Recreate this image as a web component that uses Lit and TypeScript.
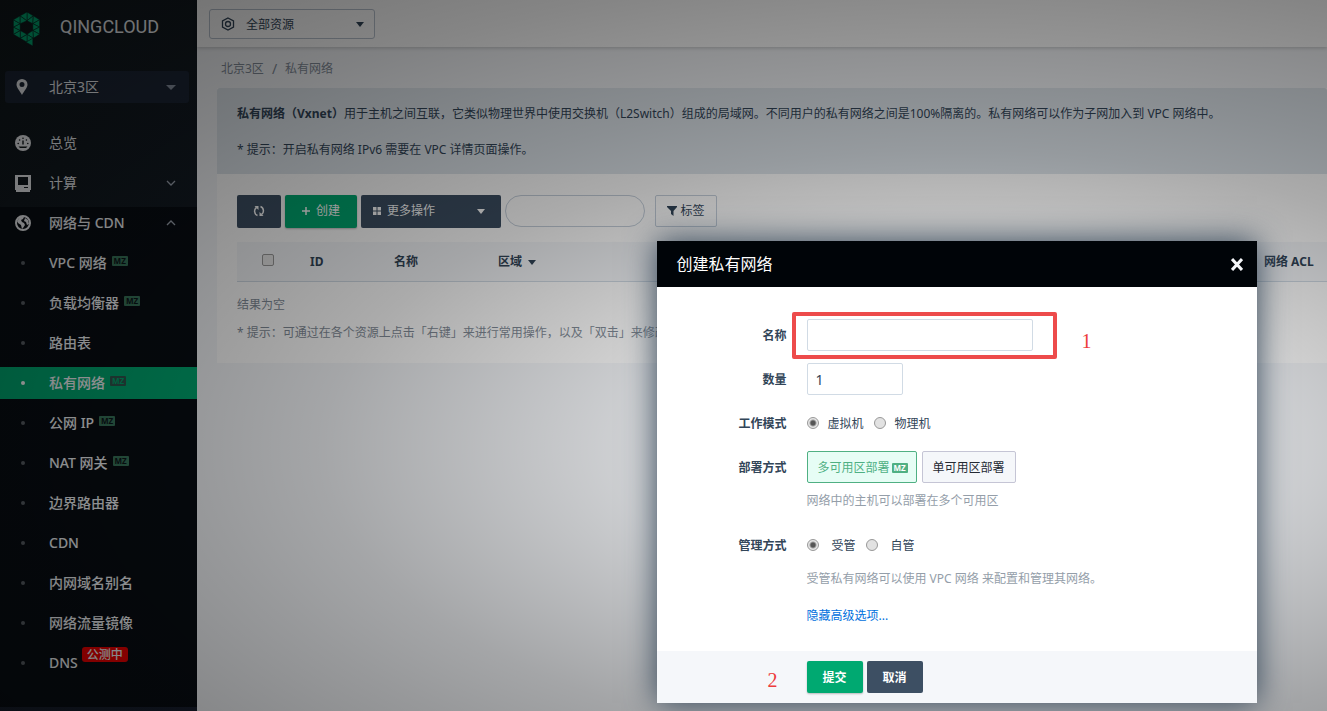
import { LitElement, html, css, svg } from "lit";
import { customElement } from "lit/decorators.js";

interface NavItem { label: string; mz?: boolean; active?: boolean; beta?: string; }

const NAV: NavItem[] = [
  { label: "VPC 网络", mz: true },
  { label: "负载均衡器", mz: true },
  { label: "路由表" },
  { label: "私有网络", mz: true, active: true },
  { label: "公网 IP", mz: true },
  { label: "NAT 网关", mz: true },
  { label: "边界路由器" },
  { label: "CDN" },
  { label: "内网域名别名" },
  { label: "网络流量镜像" },
  { label: "DNS", beta: "公测中" },
];

const hexLogo = () => {
  const outer = [[14, 0], [27, 8], [27, 23], [14, 31], [0, 23], [0, 8]];
  const inner = [[14, 9], [20, 12], [20, 19], [14, 23], [7, 19], [7, 12]];
  return svg`<g fill="#00b277" stroke="#0b1419" stroke-width=".5">
    ${outer.map((p, i) => {
      const q = outer[(i + 1) % 6], a = inner[i], b = inner[(i + 1) % 6];
      const m = [(p[0] + q[0]) / 2, (p[1] + q[1]) / 2];
      return svg`<path d="M${p} L${m} L${a}Z"></path><path d="M${m} L${a} L${b}Z"></path><path d="M${m} L${q} L${b}Z"></path>`;
    })}
    <path d="M13 31L20 27V35Z"></path>
  </g>`;
};

@customElement("app-root")
export class AppRoot extends LitElement {
  static styles = css`
    :host {
      display: block;
      position: relative;
      min-height: 100vh;
      overflow: hidden;
      font: 12px/20px "Noto Sans", "Noto Sans CJK SC", sans-serif;
      color: #324558;
    }
    * { box-sizing: border-box; }
    svg { display: block; flex: none; }
    button, input, select { font: inherit; color: inherit; margin: 0; }
    a { color: inherit; text-decoration: none; }
    .shell { display: flex; min-height: 100vh; background: #f5f7fa; }

    .side { width: 197px; flex: none; background: linear-gradient(135deg, #10181b, #181f2f); color: #f5f7fa; }
    .brand { display: flex; align-items: center; height: 56px; padding: 2px 12px 0; gap: 19px; }
    .brand-name { font: 18px/24px "Roboto", sans-serif; margin-bottom: 4px; }
    .zone {
      display: flex; align-items: center; width: 184px; height: 32px; margin: 15px 5px 24px;
      padding: 0 13px 0 10px; border: 0; border-radius: 3px; background: #1c2636;
      font-size: 14px; text-align: left;
    }
    .zone span { flex: 1; margin-left: 20px; }
    .zone .caret { color: #8c96a5; border-left-width: 5px; border-right-width: 5px; }
    .caret { width: 0; height: 0; border: 4px solid transparent; border-top: 5px solid; border-bottom: 0; }
    .group { display: flex; align-items: center; height: 32px; margin-bottom: 8px; padding: 0 21px 0 15px; font-size: 14px; }
    .group span { flex: 1; margin-left: 18px; }
    .group .chev { color: #a0a8b4; }
    .open { background: #080d13; min-height: 500px; font-weight: 500; }
    .open ul { list-style: none; margin: 0; padding: 0; }
    .open li { display: flex; margin-bottom: 8px; }
    .nav { flex: 1; display: flex; align-items: center; height: 32px; padding-left: 21px; font-size: 14px; }
    .dot { width: 4px; height: 4px; border-radius: 50%; background: #5a6067; margin-right: 24px; }
    .nav.on { background: #00a971; }
    .nav.on .dot { background: #fff; }
    .mz {
      width: 16px; height: 10px; margin: 0 0 4px 5px; border-radius: 1px; background: #39775c; color: #0b1419;
      font: bold 8px/10px "Noto Sans", sans-serif; text-align: center;
    }
    .nav.on .mz { background: #30574e; color: #00a971; }
    .beta { height: 15px; margin: 0 0 18px 4px; padding: 0 5px; border-radius: 3px; background: #f00000; font-size: 12px; line-height: 15px; }

    .main { flex: 1; min-width: 0; }
    .top { height: 47px; padding: 9px 12px; background: #fff; box-shadow: 0 1px 4px rgba(0,0,0,.2); position: relative; }
    .scope { display: flex; align-items: center; width: 166px; height: 30px; padding: 0 10px 0 11px; border: 1px solid #b9c3cf; border-radius: 3px; background: none; }
    .scope span { flex: 1; text-align: left; margin-left: 11px; padding-top: 1px; }
    .crumbs { display: flex; gap: 8px; height: 41px; align-items: center; padding: 3px 24px 0; color: #838d99; }
    .crumbs span { font-size: 14px; }
    .panel { margin-left: 20px; background: #fff; padding-bottom: 12px; }
    .intro { height: 86px; padding: 16px 20px; background: #dfe6ec; border-radius: 3px 3px 0 0; }
    .intro p { margin: 0 0 16px; white-space: nowrap; }
    .tools { display: flex; gap: 4px; align-items: center; padding: 20px 20px 14px; height: 68px; }
    .btn { display: flex; align-items: center; justify-content: center; gap: 6px; height: 33px; padding: 0 12px; border: 0; border-radius: 2px; background: #3d4f63; color: #fff; }
    .btn.go { background: #00a971; box-shadow: 0 1px 2px rgba(0,0,0,.25); }
    .icon-btn { width: 44px; }
    .tools .go { width: 72px; }
    .more { width: 140px; padding-right: 16px; }
    .more span { flex: 1; text-align: left; }
    .search { width: 140px; height: 32px; padding: 0 14px; border: 1px solid #c5cfdb; border-radius: 16px; background: none; }
    .tag { display: flex; align-items: center; justify-content: center; gap: 3px; width: 62px; height: 32px; margin-left: 6px; padding: 0; border: 1px solid #c5cfdb; border-radius: 2px; background: none; }
    table { width: calc(100% - 20px); margin-left: 20px; border-collapse: collapse; table-layout: fixed; }
    th { height: 39px; padding: 2px 0 0; text-align: left; background: #f5f7fa; border-bottom: 1px solid #d1dbe5; white-space: nowrap; }
    th .caret { display: inline-block; margin-left: 3px; vertical-align: middle; }
    .c0 { width: 73px; } .c1 { width: 84px; } .c2 { width: 104px; } .c3 { width: 158px; } .c5 { width: 63px; }
    th input { display: block; appearance: none; width: 12px; height: 12px; margin-left: 25px; margin-bottom: 5px; border: 1px solid #9a9a9a; border-radius: 2px; background: #eaeaea; }
    td { padding: 13px 0 0; color: #838d99; white-space: nowrap; overflow: hidden; }
    td p { margin: 0 0 8px; }

    .veil {
      position: absolute; inset: 0;
      background: radial-gradient(ellipse farthest-corner at 72% 63%,
        rgba(0,0,0,.05), rgba(0,0,0,.17) 26%, rgba(0,0,0,.33) 47%, rgba(0,0,0,.38) 56%, rgba(0,0,0,.48) 75%, rgba(0,0,0,.58));
    }
    .modal {
      position: absolute; left: calc(50% - 7px); top: 241px; width: 600px; background: #fff;
      box-shadow: 0 0 30px #324558;
    }
    .head { display: flex; align-items: center; justify-content: space-between; height: 46px; padding: 0 14px 0 20px; background: #000408; color: #fff; }
    .head h2 { margin: 0; font-size: 16px; font-weight: 400; }
    .close { padding: 0; border: 0; background: none; color: #f5f7fa; }
    form { margin: 0; }
    .fields { padding: 32px 20px 25px 0; }
    .row { display: grid; grid-template-columns: 130px 1fr; column-gap: 20px; align-items: center; min-height: 32px; margin-bottom: 12px; }
    .row .key { text-align: right; font-weight: 700; padding-top: 2px; }
    .text { display: block; height: 32px; width: 226px; padding: 0 8px; border: 1px solid #d1dbe5; border-radius: 2px; background: #fff; font-size: 14px; }
    .text.num { width: 96px; }
    .mark { position: relative; width: 226px; }
    .mark::after { content: ""; position: absolute; inset: -7px -24px -8px -15px; border: 4px solid #ed4b4b; border-radius: 2px; pointer-events: none; }
    .step { position: absolute; color: #ed3b3b; font: 20px/24px "Liberation Serif", serif; }
    .one { left: 275px; top: 10px; }
    .two { left: 111px; top: 17px; }
    .opts { display: flex; align-items: center; gap: 10px; }
    .opts label { display: flex; align-items: center; gap: 9px; padding-top: 2px; }
    .opts.loose label { gap: 13px; }
    .opts input { appearance: none; width: 12px; height: 12px; margin-bottom: 3px; border: 1px solid #989898; border-radius: 50%; background: #e2e2e2; }
    .opts input:checked { background: radial-gradient(circle, #555 0 2px, #e6e6e6 4px); }
    .choices { display: flex; gap: 5px; }
    .choice { display: flex; align-items: center; gap: 2px; height: 32px; padding: 2px 10px 0; border: 1px solid #c5c5d5; border-radius: 2px; background: #f5f7fa; color: #252a33; }
    .choice.sel { padding: 2px 8px 0 10px; border-color: #4fb083; background: #e6fdf5; color: #4fb083; }
    .choice .mz { margin: 0; background: #4fb083; color: #fff; }
    .hint { margin: -4px 0 18px 150px; color: #949ea9; }
    .hint.low { margin: -4px 0 17px 150px; }
    .adv { margin-left: 150px; color: #0070dd; }
    .foot { display: flex; gap: 4px; position: relative; padding: 10px 0 10px 150px; background: #f5f7fa; }
    .foot .btn { width: 56px; height: 32px; font-weight: 700; padding: 2px 0 0; }
  `;

  render() {
    return html`
      <div class="shell">
        <aside class="side">
          <div class="brand">
            <svg width="29" height="36" viewBox="-1 -1 29 37">${hexLogo()}</svg>
            <span class="brand-name">QINGCLOUD</span>
          </div>
          <button class="zone">
            <svg width="14" height="18" viewBox="0 0 14 18"><path fill="currentColor" fill-rule="evenodd" d="M7 1a5.500 5.500 0 0 0-5.500 5.500C1.500 10 5 13 7 17c2-4 5.500-7 5.500-10.500A5.500 5.500 0 0 0 7 1zm0 3a2.500 2.500 0 1 1 0 5 2.500 2.500 0 0 1 0-5z"></path></svg>
            <span>北京3区</span><i class="caret"></i>
          </button>
          <div class="group">
            <svg width="16" height="16" viewBox="0 0 16 16"><circle cx="8" cy="8" r="8" fill="currentColor"></circle><path d="M8 5.500v4" stroke="#10181b" stroke-width="1.400"></path><path d="M3.500 11.500h9l-1.500 1.500H5z" fill="#10181b"></path><g fill="#10181b"><circle cx="3.200" cy="8.500" r=".8"></circle><circle cx="12.800" cy="8.500" r=".8"></circle><circle cx="4.600" cy="5" r=".8"></circle><circle cx="11.400" cy="5" r=".8"></circle><circle cx="8" cy="3.300" r=".8"></circle></g></svg>
            <span>总览</span>
          </div>
          <div class="group">
            <svg width="16" height="17" viewBox="0 0 16 17"><path fill="currentColor" fill-rule="evenodd" d="M0 0h16v15h-1v2H1v-2H0zM3 2v8h10V2zM9 12v1h4v-1z"></path></svg>
            <span>计算</span>
            <svg class="chev" width="10" height="6" viewBox="0 0 10 6"><path d="M1 1l4 4 4-4" fill="none" stroke="currentColor" stroke-width="1.300"></path></svg>
          </div>
          <div class="open">
            <div class="group">
              <svg width="16" height="16" viewBox="0 0 16 16"><circle cx="8" cy="8" r="7" fill="none" stroke="currentColor" stroke-width="2"></circle><path fill="currentColor" d="M2 6l3-4 4 0-1 2-2 1 1 2 2 1 1 2-2 3-1 1-1-4-3-2zM10 3l3 2 1 4-2 1-1-3-2-1z"></path></svg>
              <span>网络与 CDN</span>
              <svg class="chev" width="10" height="6" viewBox="0 0 10 6"><path d="M1 5l4-4 4 4" fill="none" stroke="currentColor" stroke-width="1.300"></path></svg>
            </div>
            <ul>
              ${NAV.map((n) => html`<li><a class="nav ${n.active ? "on" : ""}" href="#"><i class="dot"></i>${n.label}${n.mz ? html`<b class="mz">MZ</b>` : ""}${n.beta ? html`<span class="beta">${n.beta}</span>` : ""}</a></li>`)}
            </ul>
          </div>
        </aside>
        <main class="main">
          <header class="top">
            <button class="scope">
              <svg width="14" height="14" viewBox="0 0 14 14" fill="none" stroke="currentColor" stroke-width="1.300"><path d="M7 1l5.500 3v6L7 13l-5.500-3V4z"></path><circle cx="7" cy="7" r="2.500"></circle></svg>
              <span>全部资源</span><i class="caret"></i>
            </button>
          </header>
          <nav class="crumbs"><a href="#">北京3区</a><span>/</span><a href="#">私有网络</a></nav>
          <section class="panel">
            <div class="intro">
              <p><b>私有网络（Vxnet）</b>用于主机之间互联，它类似物理世界中使用交换机（L2Switch）组成的局域网。不同用户的私有网络之间是100%隔离的。私有网络可以作为子网加入到 VPC 网络中。</p>
              <p>* 提示：开启私有网络 IPv6 需要在 VPC 详情页面操作。</p>
            </div>
            <div class="tools">
              <button class="btn icon-btn" aria-label="刷新"><svg width="12" height="12" viewBox="0 0 12 12" fill="none" stroke="currentColor" stroke-width="1.500"><path d="M4.500 10.500C.8 9 .8 4 3.500 2.500M7.500 1.500C11.200 3 11.200 8 8.500 9.500"></path><path fill="currentColor" stroke="none" d="M1.500 1H5.500V5zM10.500 11H6.500V7z"></path></svg></button>
              <button class="btn go"><svg width="8" height="8" viewBox="0 0 8 8"><path d="M4 0v8M0 4h8" stroke="currentColor" stroke-width="1.500"></path></svg>创建</button>
              <button class="btn more"><svg width="8" height="8" viewBox="0 0 8 8"><path fill="currentColor" d="M0 0h3.500v3.500H0zM4.500 0H8v3.500H4.500zM0 4.500h3.500V8H0zM4.500 4.500H8V8H4.500z"></path></svg><span>更多操作</span><i class="caret"></i></button>
              <input class="search" type="search" aria-label="搜索">
              <button class="tag"><svg width="10" height="10" viewBox="0 0 10 10"><path fill="currentColor" d="M0 0h10v1L6.500 5v5L4 8V5L0 1z"></path></svg>标签</button>
            </div>
            <table>
              <thead><tr>
                <th class="c0"><input type="checkbox" aria-label="全选"></th><th class="c1">ID</th><th class="c2">名称</th><th class="c3">区域 <i class="caret"></i></th><th></th><th class="c5">网络 ACL</th>
              </tr></thead>
              <tbody><tr><td colspan="6"><p>结果为空</p><p>* 提示：可通过在各个资源上点击「右键」来进行常用操作，以及「双击」来修改基本属性。</p></td></tr></tbody>
            </table>
          </section>
        </main>
      </div>
      <div class="veil"></div>
      <section class="modal" role="dialog" aria-label="创建私有网络">
        <header class="head"><h2>创建私有网络</h2>
          <button class="close" aria-label="关闭"><svg width="12" height="14" viewBox="0 0 12 14"><path d="M1 2l10 11M11 2L1 13" stroke="currentColor" stroke-width="3"></path></svg></button>
        </header>
        <form @submit=${(e: Event) => e.preventDefault()}>
          <div class="fields">
            <div class="row"><label class="key" for="name">名称</label><div class="mark"><input class="text" id="name"><span class="step one">1</span></div></div>
            <div class="row"><label class="key" for="count">数量</label><input class="text num" id="count" value="1"></div>
            <div class="row"><span class="key">工作模式</span><div class="opts">
              <label><input type="radio" name="mode" checked>虚拟机</label><label><input type="radio" name="mode">物理机</label></div></div>
            <div class="row"><span class="key">部署方式</span><div class="choices">
              <button type="button" class="choice sel">多可用区部署<b class="mz">MZ</b></button><button type="button" class="choice">单可用区部署</button></div></div>
            <p class="hint">网络中的主机可以部署在多个可用区</p>
            <div class="row"><span class="key">管理方式</span><div class="opts loose">
              <label><input type="radio" name="manage" checked>受管</label><label><input type="radio" name="manage">自管</label></div></div>
            <p class="hint low">受管私有网络可以使用 VPC 网络 来配置和管理其网络。</p>
            <a class="adv" href="#">隐藏高级选项...</a>
          </div>
          <footer class="foot"><span class="step two">2</span><button class="btn go">提交</button><button type="button" class="btn">取消</button></footer>
        </form>
      </section>`;
  }
}
